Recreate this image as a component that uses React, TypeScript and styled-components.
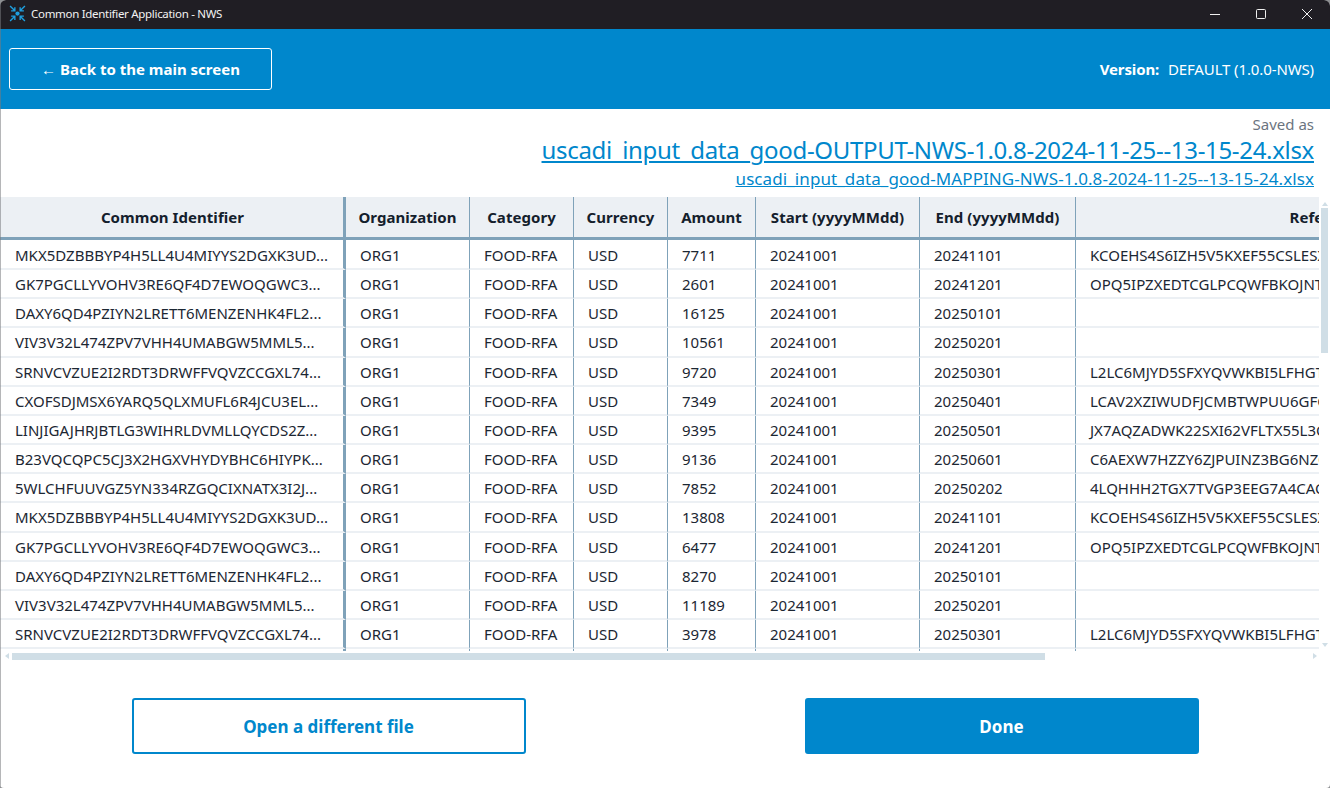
import React from "react";
import styled, { createGlobalStyle } from "styled-components";

const Global = createGlobalStyle`
  html, body { margin: 0; padding: 0; background: #8d8f92; }
  body { font-family: "Noto Sans", "Open Sans", sans-serif; overflow: hidden; }
`;
const Win = styled.div`
  position: relative; width: 1330px; height: 788px; display: flex; flex-direction: column; background: #fff; overflow: hidden;
  border-radius: 6px 6px 4px 4px;
  &::after { content: ""; position: absolute; left: 0; top: 0; bottom: 0; width: 1px; background: rgba(120, 122, 126, 0.55); }
`;
const TitleBar = styled.div`
  height: 29px; box-sizing: border-box; flex: none; background: #201e24; display: flex; align-items: center; padding: 0 0 2px 9px;
  color: #f2f2f2; font-size: 11.5px; letter-spacing: -0.3px;
`;
const TitleText = styled.span`margin-left: 5px; flex: 1;`;
const WinButton = styled.div`
  width: 46px; height: 27px; display: flex; align-items: center; justify-content: center;
`;
const Header = styled.header`
  height: 80px; flex: none; background: #0087cc; display: flex; align-items: center; justify-content: space-between;
  padding: 0 16px 0 9px; color: #fff;
`;
const BackButton = styled.button`
  width: 263px; height: 42px; background: transparent; border: 1px solid #fff; border-radius: 3px; color: #fff;
  font: 700 15px "Noto Sans", sans-serif; padding: 0;
`;
const Version = styled.div`font-size: 15px; letter-spacing: -0.12px;`;
const VersionLabel = styled.b`font-weight: 700; margin-right: 5px;`;
const Saved = styled.section`
  height: 88px; flex: none; display: flex; flex-direction: column; align-items: flex-end; padding-right: 16px;
`;
const SavedLabel = styled.div`color: #6b7480; font-size: 15px; line-height: 18px; margin: 6px 0 1px;`;
const BigLink = styled.a`color: #0087cc; font-size: 24px; line-height: 32px; text-decoration: underline; letter-spacing: -0.32px;`;
const SmallLink = styled.a`color: #0087cc; font-size: 17px; line-height: 24px; margin-top: 1px; text-decoration: underline; letter-spacing: 0.08px;`;
const TableFrame = styled.div`
  position: relative; height: 464px; flex: none; overflow: hidden;
`;
const TableClip = styled.div`width: 1319px; height: 454px; overflow: hidden;`;
const Table = styled.table`
  border-collapse: separate; border-spacing: 0; table-layout: fixed; width: 1580px; font-size: 15px; color: #1c2733;
`;
const Th = styled.th<{ $thick?: boolean }>`
  height: 43px; padding: 0 0 0 ${p => (p.$thick ? "2px" : "0")}; background: #ecf0f4; font-weight: 700; font-size: 15px; color: #14202c; letter-spacing: 0.05px;
  border-bottom: 3px solid #7fa2b9; border-right: ${p => (p.$thick ? "3px" : "1px")} solid #7fa2b9; box-sizing: border-box;
  text-align: center; white-space: nowrap; overflow: hidden;
`;
const Td = styled.td<{ $thick?: boolean }>`
  height: 25.15px; padding: 2px 0 0 ${p => (p.$thick ? "15px" : "14px")}; box-sizing: content-box; border-bottom: 2px solid #ecf0f4;
  border-right: ${p => (p.$thick ? "3px" : "1px")} solid #7fa2b9; white-space: nowrap; overflow: hidden;
  line-height: 25.15px;
  tr:first-child > & { padding-top: 3px; }
`;
const VTrack = styled.div`
  position: absolute; right: 0; top: 0; width: 11px; height: 454px;
`;
const VThumb = styled.div`position: absolute; left: 2px; top: 11px; width: 7px; height: 145px; background: #d0dee6;`;
const HTrack = styled.div`position: absolute; left: 0; bottom: 0; width: 1319px; height: 10px;`;
const HThumb = styled.div`position: absolute; left: 12px; top: 2px; width: 1033px; height: 7px; background: #d0dee6;`;
const Arrow = styled.span<{ $dir: string }>`
  position: absolute; width: 0; height: 0; border: 3px solid transparent;
  ${p => p.$dir === "up" && "border-bottom: 4px solid #d0dee6; border-top: 0; left: 3px; top: 5px;"}
  ${p => p.$dir === "down" && "border-top: 4px solid #d0dee6; border-bottom: 0; left: 3px; top: 446px;"}
  ${p => p.$dir === "left" && "border-right: 4px solid #d0dee6; border-left: 0; left: 5px; top: 2px;"}
  ${p => p.$dir === "right" && "border-left: 4px solid #d0dee6; border-right: 0; right: 2px; top: 2px;"}
`;
const Actions = styled.footer`
  flex: 1; display: flex; justify-content: center; gap: 279px; padding-top: 37px; 
`;
const ActionButton = styled.button<{ $primary?: boolean }>`
  width: 394px; height: 56px; border-radius: 3px; border: 2px solid #0087cc; font: 700 17px "Noto Sans", sans-serif;
  background: ${p => (p.$primary ? "#0087cc" : "#fff")}; color: ${p => (p.$primary ? "#fff" : "#0087cc")};
`;

const ids = [
  ["MKX5DZBBBYP4H5LL4U4MIYYS2DGXK3UD...", "7711", "20241101", "KCOEHS4S6IZH5V5KXEF55CSLESXYQ"],
  ["GK7PGCLLYVOHV3RE6QF4D7EWOQGWC3...", "2601", "20241201", "OPQ5IPZXEDTCGLPCQWFBKOJNTXYQ"],
  ["DAXY6QD4PZIYN2LRETT6MENZENHK4FL2...", "16125", "20250101", ""],
  ["VIV3V32L474ZPV7VHH4UMABGW5MML5...", "10561", "20250201", ""],
  ["SRNVCVZUE2I2RDT3DRWFFVQVZCCGXL74...", "9720", "20250301", "L2LC6MJYD5SFXYQVWKBI5LFHGTQAZ"],
  ["CXOFSDJMSX6YARQ5QLXMUFL6R4JCU3EL...", "7349", "20250401", "LCAV2XZIWUDFJCMBTWPUU6GFQAZXW"],
  ["LINJIGAJHRJBTLG3WIHRLDVMLLQYCDS2Z...", "9395", "20250501", "JX7AQZADWK22SXI62VFLTX55L3QAZ"],
  ["B23VQCQPC5CJ3X2HGXVHYDYBHC6HIYPK...", "9136", "20250601", "C6AEXW7HZZY6ZJPUINZ3BG6NZQAZX"],
  ["5WLCHFUUVGZ5YN334RZGQCIXNATX3I2J...", "7852", "20250202", "4LQHHH2TGX7TVGP3EEG7A4CAQAZXW"],
  ["MKX5DZBBBYP4H5LL4U4MIYYS2DGXK3UD...", "13808", "20241101", "KCOEHS4S6IZH5V5KXEF55CSLESXYQ"],
  ["GK7PGCLLYVOHV3RE6QF4D7EWOQGWC3...", "6477", "20241201", "OPQ5IPZXEDTCGLPCQWFBKOJNTXYQ"],
  ["DAXY6QD4PZIYN2LRETT6MENZENHK4FL2...", "8270", "20250101", ""],
  ["VIV3V32L474ZPV7VHH4UMABGW5MML5...", "11189", "20250201", ""],
  ["SRNVCVZUE2I2RDT3DRWFFVQVZCCGXL74...", "3978", "20250301", "L2LC6MJYD5SFXYQVWKBI5LFHGTQAZ"],
  ["", "", "", ""],
];
const cols: [string, number][] = [
  ["Common Identifier", 346], ["Organization", 124], ["Category", 104], ["Currency", 94],
  ["Amount", 88], ["Start (yyyyMMdd)", 164], ["End (yyyyMMdd)", 156], ["Reference", 504],
];

const Logo = () => (
  <svg width="17" height="17" viewBox="0 0 16 16" fill="none" stroke="#1ea0e0" strokeWidth="1.3">
    <circle cx="8" cy="8" r="2" fill="#1ea0e0" stroke="none" />
    <path d="M1 1l4.5 4.5M2 5.5h3.5V2M15 1l-4.5 4.5M14 5.5h-3.5V2M1 15l4.5-4.5M2 10.5h3.5V14M15 15l-4.5-4.5M14 10.5h-3.5V14" />
  </svg>
);

export default function App() {
  return (
    <Win>
      <Global />
      <TitleBar>
        <Logo />
        <TitleText>Common Identifier Application - NWS</TitleText>
        <WinButton><svg width="10" height="10" viewBox="0 0 10 10" stroke="#f0f0f0"><path d="M0 5.5h10" /></svg></WinButton>
        <WinButton><svg width="10" height="10" viewBox="0 0 10 10" fill="none" stroke="#f0f0f0"><rect x=".5" y=".5" width="9" height="9" rx="1" /></svg></WinButton>
        <WinButton><svg width="10" height="10" viewBox="0 0 10 10" stroke="#f0f0f0"><path d="M0 0l10 10M10 0L0 10" /></svg></WinButton>
      </TitleBar>
      <Header>
        <BackButton>← Back to the main screen</BackButton>
        <Version><VersionLabel>Version:</VersionLabel> DEFAULT (1.0.0-NWS)</Version>
      </Header>
      <Saved>
        <SavedLabel>Saved as</SavedLabel>
        <BigLink href="#">uscadi_input_data_good-OUTPUT-NWS-1.0.8-2024-11-25--13-15-24.xlsx</BigLink>
        <SmallLink href="#">uscadi_input_data_good-MAPPING-NWS-1.0.8-2024-11-25--13-15-24.xlsx</SmallLink>
      </Saved>
      <TableFrame>
        <TableClip>
          <Table>
            <colgroup>{cols.map(([n, w]) => <col key={n} style={{ width: w }} />)}</colgroup>
            <thead>
              <tr>{cols.map(([n], i) => <Th key={n} $thick={i === 0}>{n}</Th>)}</tr>
            </thead>
            <tbody>
              {ids.map((r, i) => (
                <tr key={i}>
                  <Td $thick>{r[0]}</Td>
                  <Td>{r[0] && "ORG1"}</Td>
                  <Td>{r[0] && "FOOD-RFA"}</Td>
                  <Td>{r[0] && "USD"}</Td>
                  <Td>{r[1]}</Td>
                  <Td>{r[0] && "20241001"}</Td>
                  <Td>{r[2]}</Td>
                  <Td>{r[3]}</Td>
                </tr>
              ))}
            </tbody>
          </Table>
        </TableClip>
        <VTrack><Arrow $dir="up" /><VThumb /><Arrow $dir="down" /></VTrack>
        <HTrack><Arrow $dir="left" /><HThumb /><Arrow $dir="right" /></HTrack>
      </TableFrame>
      <Actions>
        <ActionButton>Open a different file</ActionButton>
        <ActionButton $primary>Done</ActionButton>
      </Actions>
    </Win>
  );
}
